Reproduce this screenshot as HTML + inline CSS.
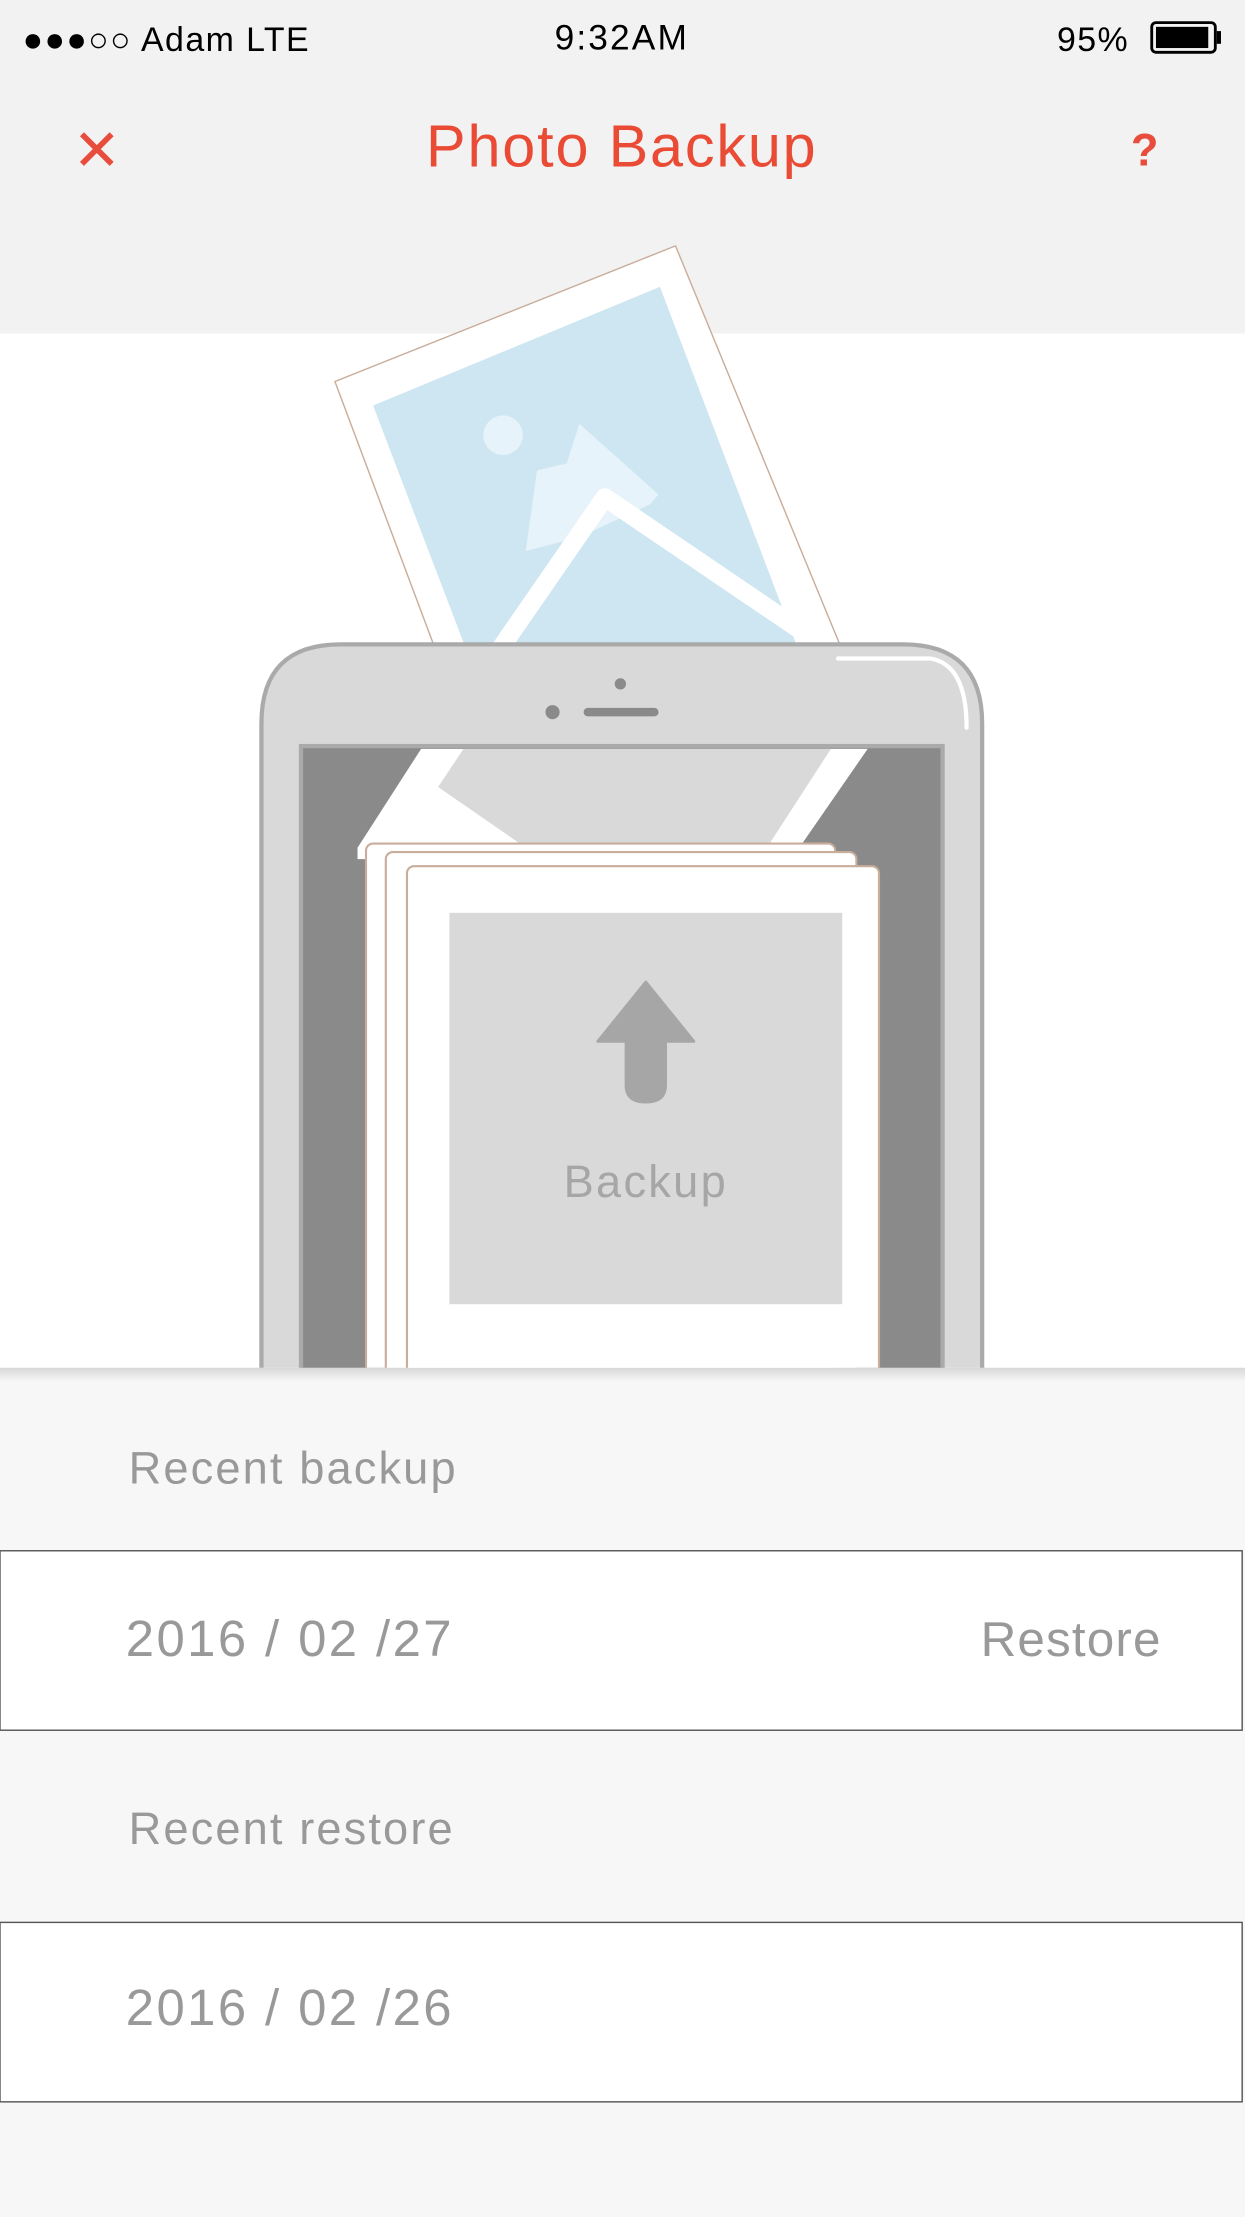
<!DOCTYPE html>
<html><head><meta charset="utf-8"><style>
html,body{margin:0;padding:0;width:1245px;height:2217px;overflow:hidden;background:#f7f7f7}
svg{display:block}
text{font-family:"Liberation Sans",sans-serif}
</style></head><body>
<svg width="1245" height="2217" viewBox="0 0 881 1569" preserveAspectRatio="none" xmlns="http://www.w3.org/2000/svg">
<defs>
<clipPath id="c"><rect x="0" y="0" width="881" height="968"/></clipPath>
<linearGradient id="sh" x1="0" y1="0" x2="0" y2="1"><stop offset="0" stop-color="#d8d8d8"/><stop offset="1" stop-color="#f7f7f7"/></linearGradient>
</defs>
<rect x="0" y="0" width="881" height="236" fill="#f2f2f2"/>
<rect x="0" y="236" width="881" height="732" fill="#fff"/>
<rect x="0" y="968" width="881" height="601" fill="#f7f7f7"/>
<rect x="0" y="968" width="881" height="10" fill="url(#sh)"/>
<!-- status bar -->
<text x="16" y="36" font-size="24" fill="#000" letter-spacing="1">●●●○○ Adam LTE</text>
<text x="440" y="35" font-size="25" fill="#000" text-anchor="middle" letter-spacing="1.5">9:32AM</text>
<text x="799" y="36" font-size="24" fill="#000" text-anchor="end" letter-spacing="1">95%</text>
<rect x="815" y="16" width="45" height="21" rx="3" fill="none" stroke="#000" stroke-width="2"/>
<rect x="818" y="19" width="37" height="15" fill="#000"/>
<rect x="861" y="22" width="3" height="9" fill="#000"/>
<!-- nav -->
<path d="M58 95 L79 116 M79 95 L58 116" stroke="#e84c3d" stroke-width="4"/>
<text x="440" y="118" font-size="42" fill="#e94b35" text-anchor="middle" letter-spacing="1.3">Photo Backup</text>
<text x="810" y="117" font-size="32" font-weight="bold" fill="#e84c3d" text-anchor="middle">?</text>
<g clip-path="url(#c)">
<polygon points="237,270 478,174 600,470 312,470" fill="#fff" stroke="#c8ad9a" stroke-width="1"/>
<polygon points="264,287 467,203 565,460 330,460" fill="#cde6f2"/>
<circle cx="356" cy="308" r="14" fill="#e6f3fa"/>
<polygon points="372,390 380,333 392,330 401,328 410,300 466,350 460,357 410,380" fill="#e6f3fa"/>
<polyline points="352,462 428,352 565,445" fill="none" stroke="#fff" stroke-width="13" stroke-linejoin="round"/>
<path d="M185 1000 V512 Q185 456 241 456 H639 Q695 456 695 512 V1000 Z" fill="#d9d9d9" stroke="#aaa" stroke-width="3"/>
<path d="M593 466 H658 Q684 470 684 515" fill="none" stroke="#fff" stroke-width="3" stroke-linecap="round"/>
<circle cx="439" cy="484" r="4" fill="#8a8a8a"/>
<circle cx="391" cy="504" r="5" fill="#8a8a8a"/>
<line x1="416" y1="504" x2="463" y2="504" stroke="#8a8a8a" stroke-width="6" stroke-linecap="round"/>
<rect x="213" y="528" width="454" height="460" fill="#8a8a8a" stroke="#aaa" stroke-width="3"/>
<polygon points="298,530 614,530 560,608 253,608 253,600" fill="#fff"/>
<polygon points="328,530 588,530 540,604 378,604 310,557" fill="#d9d9d9"/>
<rect x="259" y="597" width="332" height="400" rx="5" fill="#fff" stroke="#c8ad9a" stroke-width="1.5"/>
<rect x="273" y="603" width="333" height="400" rx="5" fill="#fff" stroke="#c8ad9a" stroke-width="1.5"/>
<rect x="288" y="613" width="334" height="400" rx="5" fill="#fff" stroke="#c8ad9a" stroke-width="1.5"/>
<rect x="318" y="646" width="278" height="277" fill="#d9d9d9"/>
<path d="M457 695 L423 737 L443 737 L443 768 Q443 780 457 780 Q471 780 471 768 L471 737 L491 737 Z" fill="#a6a6a6" stroke="#a6a6a6" stroke-width="2" stroke-linejoin="round"/>
<text x="457" y="847" font-size="32" fill="#a6a6a6" text-anchor="middle" letter-spacing="1.6">Backup</text>
</g>
<text x="91" y="1050" font-size="32" fill="#999" letter-spacing="1.5">Recent backup</text>
<rect x="0" y="1097.5" width="879" height="127" fill="#fff" stroke="#555" stroke-width="1"/>
<text x="89" y="1172" font-size="36" fill="#999" letter-spacing="1.7">2016 / 02 /27</text>
<text x="822" y="1172" font-size="35" fill="#999" text-anchor="end" letter-spacing="0.8">Restore</text>
<text x="91" y="1305" font-size="32" fill="#999" letter-spacing="1.5">Recent restore</text>
<rect x="0" y="1360.5" width="879" height="127" fill="#fff" stroke="#555" stroke-width="1"/>
<text x="89" y="1433" font-size="36" fill="#999" letter-spacing="1.7">2016 / 02 /26</text>
</svg>
</body></html>
